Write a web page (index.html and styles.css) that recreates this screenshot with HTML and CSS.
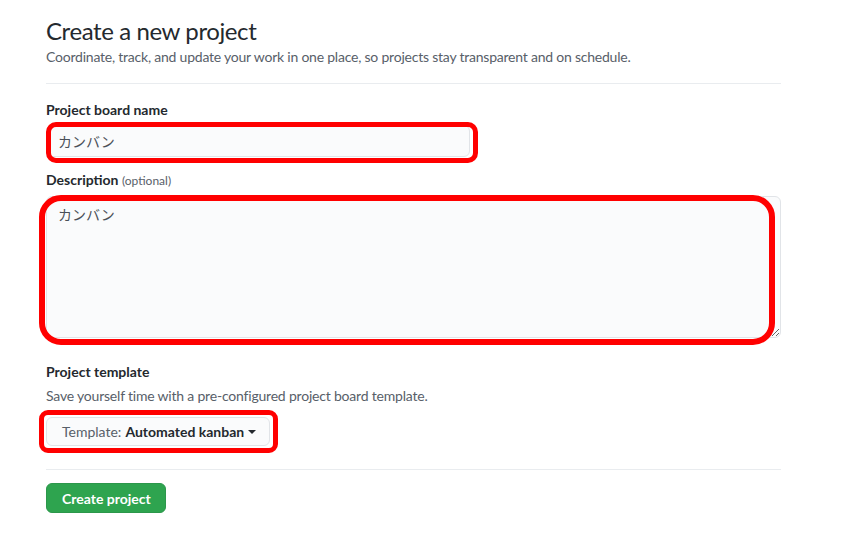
FILE: index.html
```html
<!DOCTYPE html>
<html lang="en">
<head>
<meta charset="utf-8">
<title>Create a new project</title>
<link rel="stylesheet" href="styles.css">
</head>
<body>
<main class="page">
  <header class="head">
    <h1 class="title">Create a new project</h1>
    <p class="lead">Coordinate, track, and update your work in one place, so projects stay transparent and on schedule.</p>
  </header>

  <form class="form">
    <label class="label label-name" for="name">Project board name</label>
    <div class="mark-wrap mark-name">
      <input id="name" class="input" type="text" value="カンバン">
      <span class="mark mark-name-box"></span>
    </div>

    <label class="label label-desc" for="desc">Description <span class="optional">(optional)</span></label>
    <div class="mark-wrap">
      <textarea id="desc" class="textarea">カンバン</textarea>
      <span class="mark mark-desc-box"></span>
    </div>

    <div class="template">
      <div class="label label-tpl">Project template</div>
      <p class="note">Save yourself time with a pre-configured project board template.</p>
      <div class="mark-wrap mark-inline">
        <button type="button" class="select">Template: <b>Automated kanban</b><span class="caret"></span></button>
        <span class="mark mark-tpl-box"></span>
      </div>
    </div>

    <div class="actions">
      <button type="button" class="btn-primary">Create project</button>
    </div>
  </form>
</main>
</body>
</html>
```

FILE: styles.css
```css
* { box-sizing: border-box; }
html, body { margin: 0; background: #fff; }
body {
  font-family: Lato, "Noto Sans CJK JP", sans-serif;
  color: #24292e;
  font-size: 14px;
}
.page {
  width: 735px;
  margin-left: 46px;
  padding-top: 16px;
}
.head {
  padding-bottom: 16px;
  border-bottom: 1px solid #e9ecef;
}
.title {
  margin: 0;
  font-size: 24px;
  font-weight: 400;
  line-height: 30px;
  letter-spacing: -0.4px;
}
.lead {
  margin: 0;
  color: #586069;
  font-size: 14px;
  line-height: 21px;
  letter-spacing: -0.22px;
}
.form { display: flex; flex-direction: column; }
.label {
  display: block;
  font-weight: 700;
  font-size: 14px;
  line-height: 21px;
}
.label-name { margin-top: 15px; margin-bottom: 5px; }
.label-desc { margin-top: 12px; margin-bottom: 5px; }
.optional { font-size: 12px; color: #586069; font-weight: 400; }
.mark-wrap { position: relative; }
.mark-name { width: 424px; }
.mark-inline { display: inline-block; }
.mark {
  position: absolute;
  border: 5px solid #ff0000;
  pointer-events: none;
}
.mark-name-box { left: 0; right: -8px; top: -3px; bottom: -6px; border-radius: 10px; }
.mark-desc-box { left: -7px; right: 6px; top: -1px; bottom: -7px; border-width: 6px; border-radius: 22px; }
.mark-tpl-box { left: -7px; right: -8px; top: -7px; bottom: -7px; border-radius: 9px; }
.input, .textarea {
  display: block;
  width: 100%;
  font-family: "Noto Sans CJK JP", sans-serif;
  font-size: 14px;
  color: #4a5058;
  background: #fafbfc;
  border: 1px solid #e1e4e8;
  border-radius: 6px;
  padding: 5px 11px;
  outline: none;
}
.input { height: 32px; line-height: 20px; }
.textarea {
  height: 142px;
  line-height: 20px;
  padding-top: 7px;
  resize: vertical;
}
.template {
  margin-top: 23px;
  padding-bottom: 23px;
  border-bottom: 1px solid #e9ecef;
}
.note {
  margin: 3px 0 0;
  color: #586069;
  line-height: 21px;
  letter-spacing: -0.2px;
}
.mark-inline { margin-top: 11px; }
.select {
  display: flex;
  align-items: center;
  height: 29px;
  padding: 0 13px 0 15px;
  font-family: Lato, sans-serif;
  font-size: 14px;
  color: #586069;
  background: #fafbfc;
  border: 1px solid #e1e4e8;
  border-radius: 6px;
}
.select b { color: #24292e; font-weight: 700; margin-left: 4px; }
.caret {
  width: 0; height: 0;
  margin-left: 4px;
  border-left: 4px solid transparent;
  border-right: 4px solid transparent;
  border-top: 4px solid #24292e;
}
.actions { margin-top: 13px; }
.btn-primary {
  height: 30px;
  padding: 0 14px 0 15px;
  font-family: Lato, sans-serif;
  font-size: 14px;
  font-weight: 700;
  color: #fff;
  background: #2ea44f;
  border: 1px solid #2c974b;
  border-radius: 6px;
}
```
